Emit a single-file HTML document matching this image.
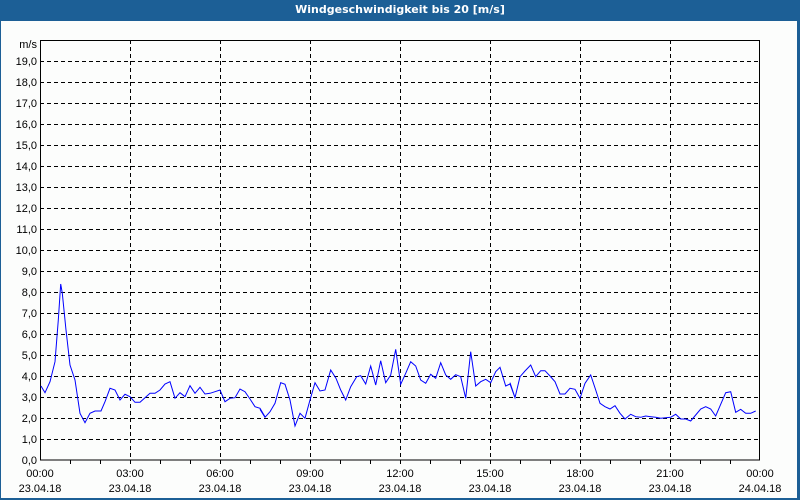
<!DOCTYPE html>
<html><head><meta charset="utf-8"><style>
html,body{margin:0;padding:0;width:800px;height:500px;overflow:hidden;background:#fcfdfc;}
#frame{position:absolute;left:0;top:0;width:800px;height:500px;box-sizing:border-box;border-left:1px solid #1c5f96;border-right:3px solid #1c5f96;border-bottom:2px solid #1c5f96;}
#title{position:absolute;left:0;top:0;width:800px;height:21px;background:#1c5f96;color:#fff;font:bold 11px "DejaVu Sans","Liberation Sans",sans-serif;text-align:center;line-height:20px;}
svg{position:absolute;left:0;top:0;}
text{font-family:"Liberation Sans",sans-serif;font-size:11px;fill:#000;}
</style></head><body>
<div id="frame"></div>
<div id="title">Windgeschwindigkeit bis 20 [m/s]</div>
<svg id="s" width="800" height="500"></svg>
<script>
var s=document.getElementById('s'),h='';
for(var i=1;i<=19;i++){var y=460-21*i+0.5;h+='<line x1="40" x2="760" y1="'+y+'" y2="'+y+'" stroke="#000" stroke-dasharray="4,3"/>';}
for(var i=1;i<8;i++){var x=40+90*i+0.5;h+='<line x1="'+x+'" x2="'+x+'" y1="40" y2="460" stroke="#000" stroke-dasharray="4,3"/>';}
for(var i=1;i<24;i++){var x=40+30*i+0.5;h+='<line x1="'+x+'" x2="'+x+'" y1="460" y2="464" stroke="#000"/>';}
h+='<rect x="40.5" y="40.5" width="719" height="419.5" fill="none" stroke="#000"/>';
for(var i=0;i<=19;i++){var y=460-21*i;h+='<text x="37" y="'+(y+4)+'" text-anchor="end">'+i+',0</text>';}
h+='<text x="37" y="48" text-anchor="end">m/s</text>';
var t=['00:00','03:00','06:00','09:00','12:00','15:00','18:00','21:00','00:00'];
for(var i=0;i<9;i++){var x=40+90*i;h+='<text x="'+x+'" y="477" text-anchor="middle">'+t[i]+'</text><text x="'+x+'" y="492" text-anchor="middle">'+(i==8?'24.04.18':'23.04.18')+'</text>';}
var z5=[[33,348],[45,368],[60,335],[75,275],[85,150],[92,42],[97,70],[108,180],[120,285],[135,330],[150,430],[165,458],[180,430],[195,423],[213,423],[225,395],[240,355],[255,360],[270,390],[285,373],[300,380],[315,397],[330,397],[345,383],[360,370],[375,370],[390,360],[405,342],[420,335],[435,385],[450,368],[465,380],[480,347],[495,370],[510,352],[525,372],[540,370],[555,365],[570,360],[585,395],[600,385],[615,383],[630,357],[645,365],[660,387],[675,410],[690,415],[705,440]];
var z6=[[0,208],[15,232],[30,215],[45,190],[62,128],[75,133],[90,180],[105,258],[120,220],[135,235],[150,180],[165,128],[180,153],[195,150],[212,90],[228,115],[242,150],[257,180],[272,140],[290,110],[302,107],[317,132],[332,78],[347,135],[362,62],[377,128],[392,105],[407,28],[422,133],[437,100],[452,65],[467,78],[482,120],[497,130],[512,103],[527,115],[542,68],[557,105],[572,118],[587,104],[602,110],[617,175],[632,35],[647,138],[662,125],[677,118],[692,128],[707,95],[720,82],[737,138],[750,132],[765,173]];
var z7=[[0,128],[15,173],[30,110],[45,93],[62,75],[77,110],[92,92],[105,92],[120,108],[135,125],[150,162],[165,162],[180,145],[195,148],[210,175],[225,130],[242,105],[257,150],[270,190],[285,200],[300,207],[315,197],[330,220],[345,237],[362,223],[377,230],[392,232],[407,228],[422,230],[437,232],[452,235],[467,233],[482,232],[497,223],[512,237],[527,237],[542,243],[557,225],[572,207],[587,200],[602,207],[617,228],[632,193],[647,158],[662,155],[677,217],[692,208],[707,220],[722,220],[737,213]];
var p=[];
z5.forEach(function(a){p.push((30+a[0]/3).toFixed(1)+','+(270+a[1]/3).toFixed(1));});
z6.forEach(function(a){p.push((260+a[0]/3).toFixed(1)+','+(340+a[1]/3).toFixed(1));});
z7.forEach(function(a){p.push((510+a[0]/3).toFixed(1)+','+(340+a[1]/3).toFixed(1));});
h+='<polyline points="'+p.join(' ')+'" fill="none" stroke="#0000ff" stroke-width="1"/>';
s.innerHTML=h;
</script>
</body></html>
